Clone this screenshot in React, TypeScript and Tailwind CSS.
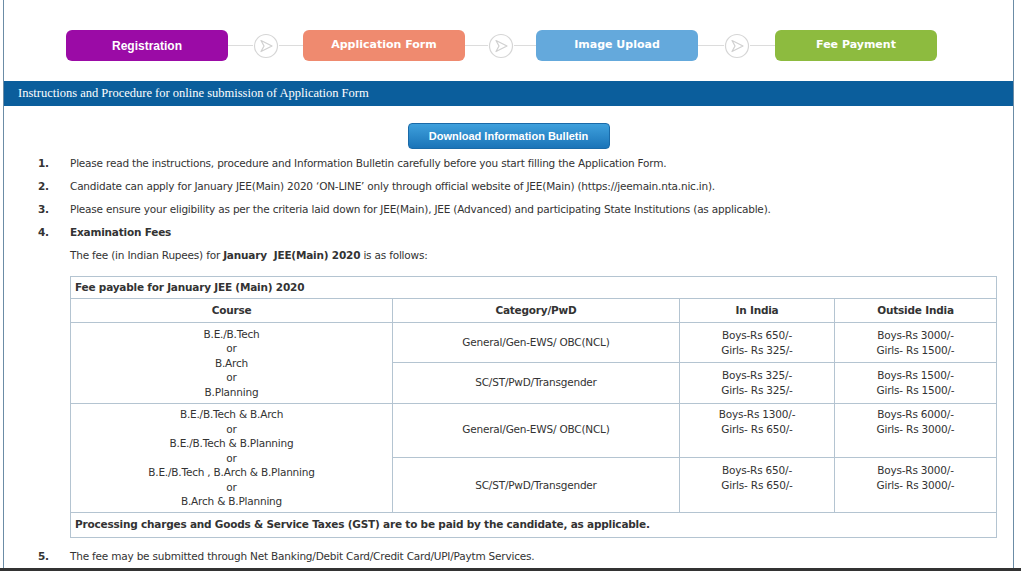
const steps = [
  { label: 'Registration', cls: 'bg-[#9b0ba6]', gap: 'w-[75px]' },
  { label: 'Application Form', cls: 'bg-[#ef8a6f]', gap: 'w-[71px]' },
  { label: 'Image Upload', cls: 'bg-[#64a9dc]', gap: 'w-[77px]' },
  { label: 'Fee Payment', cls: 'bg-[#8dbb3f]', gap: '' }
]

const instructions = [
  'Please read the instructions, procedure and Information Bulletin carefully before you start filling the Application Form.',
  "Candidate can apply for January JEE(Main) 2020 \u2018ON-LINE\u2019 only through official website of JEE(Main) (https://jeemain.nta.nic.in).",
  'Please ensure your eligibility as per the criteria laid down for JEE(Main), JEE (Advanced) and participating State Institutions (as applicable).'
]

function StepArrow({ width }: { width: string }) {
  return (
    <div className={`flex items-center ${width} h-full`}>
      <div className="flex-1 h-px bg-[#dcdcdc]" />
      <svg width="26" height="26" viewBox="0 0 26 26" className="shrink-0">
        <circle cx="13" cy="13" r="11.5" fill="#fff" stroke="#d6d6d6" strokeWidth="1.2" />
        <path d="M8 7.5 L19 13 L8 18.5 L11 13 Z" fill="none" stroke="#d0d0d0" strokeWidth="1.2" strokeLinejoin="round" />
      </svg>
      <div className="flex-1 h-px bg-[#dcdcdc]" />
    </div>
  )
}

function FeeCell({ boys, girls }: { boys: string; girls: string }) {
  return (
    <div className="flex flex-col items-center leading-[15px]">
      <span>{boys}</span>
      <span>{girls}</span>
    </div>
  )
}

export default function App() {
  const cell = 'border border-[#b4c4d1] text-center text-[#333]'

  return (
    <div className="w-[1021px] h-[571px] bg-white overflow-hidden flex flex-col" style={{ fontFamily: '"DejaVu Sans", Verdana, sans-serif' }}>
      <div className="mx-[3px] w-[1011px] flex-1 border-x border-[#6b8ca6] flex flex-col">
        {/* Steps */}
        <div className="flex items-center h-[31px] mt-[30px] pl-[62px]">
          {steps.map((s, i) => (
            <div key={s.label} className="flex items-center h-full">
              <div
                className={`${s.cls} w-[162px] h-[31px] rounded-[6px] flex items-center justify-center text-white font-bold ${
                  i === 0 ? 'text-[12px]' : 'text-[11px]'
                }`}
                style={i === 0 ? { fontFamily: '"Liberation Sans", Arial, sans-serif' } : undefined}
              >
                {s.label}
              </div>
              {s.gap && <StepArrow width={s.gap} />}
            </div>
          ))}
        </div>

        {/* Title bar */}
        <div
          className="mt-[20px] h-[25px] bg-[#0b5e9c] text-white text-[12.5px] flex items-center pl-[14px]"
          style={{ fontFamily: '"Liberation Serif", "Times New Roman", serif' }}
        >
          Instructions and Procedure for online submission of Application Form
        </div>

        <div className="flex justify-center mt-[17px]">
          <div
            className="w-[202px] h-[26px] rounded-[4px] bg-gradient-to-b from-[#3ea0dc] to-[#1a74b8] border border-[#1a6aa8] text-white text-[11px] font-bold flex items-center justify-center"
            style={{ fontFamily: '"Liberation Sans", Arial, sans-serif' }}
          >
            Download Information Bulletin
          </div>
        </div>

        {/* List */}
        <div className="text-[10.5px] text-[#333] mt-[3px] tracking-[-0.2px]">
          {instructions.map((t, i) => (
            <div key={i} className="flex h-[23px] items-center">
              <span className="w-[66px] pl-[34px] font-bold">{i + 1}.</span>
              <span>{t}</span>
            </div>
          ))}
          <div className="flex h-[23px] items-center">
            <span className="w-[66px] pl-[34px] font-bold">4.</span>
            <span className="font-bold">Examination Fees</span>
          </div>
          <div className="flex h-[23px] items-center pl-[66px]">
            <span>
              The fee (in Indian Rupees) for <b>January&nbsp; JEE(Main) 2020</b> is as follows:
            </span>
          </div>

          {/* Table */}
          <div className="ml-[66px] mt-[9px] w-[927px] border border-[#b4c4d1] text-[10.5px]">
            <div className="h-[22px] flex items-center pl-[4px] font-bold border-b border-[#b4c4d1]">
              Fee payable for January JEE (Main) 2020
            </div>
            <div className="grid grid-cols-[323px_287px_155px_1fr] grid-rows-[24px_40px_41px_54px_55px] -mx-px">
              <div className={`${cell} border-t-0 flex items-center justify-center font-bold`}>Course</div>
              <div className={`${cell} border-t-0 border-l-0 flex items-center justify-center font-bold`}>Category/PwD</div>
              <div className={`${cell} border-t-0 border-l-0 flex items-center justify-center font-bold`}>In India</div>
              <div className={`${cell} border-t-0 border-l-0 flex items-center justify-center font-bold`}>Outside India</div>

              <div className={`${cell} border-t-0 row-span-2 flex flex-col items-center justify-center leading-[14.5px]`}>
                <span>B.E./B.Tech</span>
                <span>or</span>
                <span>B.Arch</span>
                <span>or</span>
                <span>B.Planning</span>
              </div>
              <div className={`${cell} border-t-0 border-l-0 flex items-center justify-center`}>General/Gen-EWS/ OBC(NCL)</div>
              <div className={`${cell} border-t-0 border-l-0 flex items-center justify-center`}>
                <FeeCell boys="Boys-Rs 650/-" girls="Girls- Rs 325/-" />
              </div>
              <div className={`${cell} border-t-0 border-l-0 flex items-center justify-center`}>
                <FeeCell boys="Boys-Rs 3000/-" girls="Girls- Rs 1500/-" />
              </div>

              <div className={`${cell} border-t-0 border-l-0 flex items-center justify-center`}>SC/ST/PwD/Transgender</div>
              <div className={`${cell} border-t-0 border-l-0 flex items-center justify-center`}>
                <FeeCell boys="Boys-Rs 325/-" girls="Girls- Rs 325/-" />
              </div>
              <div className={`${cell} border-t-0 border-l-0 flex items-center justify-center`}>
                <FeeCell boys="Boys-Rs 1500/-" girls="Girls- Rs 1500/-" />
              </div>

              <div className={`${cell} border-t-0 row-span-2 flex flex-col items-center justify-center leading-[14.5px]`}>
                <span>B.E./B.Tech &amp; B.Arch</span>
                <span>or</span>
                <span>B.E./B.Tech &amp; B.Planning</span>
                <span>or</span>
                <span>B.E./B.Tech , B.Arch &amp; B.Planning</span>
                <span>or</span>
                <span>B.Arch &amp; B.Planning</span>
              </div>
              <div className={`${cell} border-t-0 border-l-0 flex items-start pt-[18px] justify-center`}>General/Gen-EWS/ OBC(NCL)</div>
              <div className={`${cell} border-t-0 border-l-0 flex items-start pt-[3px] justify-center`}>
                <FeeCell boys="Boys-Rs 1300/-" girls="Girls- Rs 650/-" />
              </div>
              <div className={`${cell} border-t-0 border-l-0 flex items-start pt-[3px] justify-center`}>
                <FeeCell boys="Boys-Rs 6000/-" girls="Girls- Rs 3000/-" />
              </div>

              <div className={`${cell} border-t-0 border-l-0 flex items-start pt-[20px] justify-center`}>SC/ST/PwD/Transgender</div>
              <div className={`${cell} border-t-0 border-l-0 flex items-start pt-[5px] justify-center`}>
                <FeeCell boys="Boys-Rs 650/-" girls="Girls- Rs 650/-" />
              </div>
              <div className={`${cell} border-t-0 border-l-0 flex items-start pt-[5px] justify-center`}>
                <FeeCell boys="Boys-Rs 3000/-" girls="Girls- Rs 3000/-" />
              </div>
            </div>
            <div className="h-[24px] flex items-center pl-[4px] font-bold">
              Processing charges and Goods &amp; Service Taxes (GST) are to be paid by the candidate, as applicable.
            </div>
          </div>

          <div className="flex h-[23px] items-center mt-[7px]">
            <span className="w-[66px] pl-[34px] font-bold">5.</span>
            <span>The fee may be submitted through Net Banking/Debit Card/Credit Card/UPI/Paytm Services.</span>
          </div>
        </div>
      </div>
      <div className="h-[5px] bg-[#333] shrink-0" />
    </div>
  )
}
